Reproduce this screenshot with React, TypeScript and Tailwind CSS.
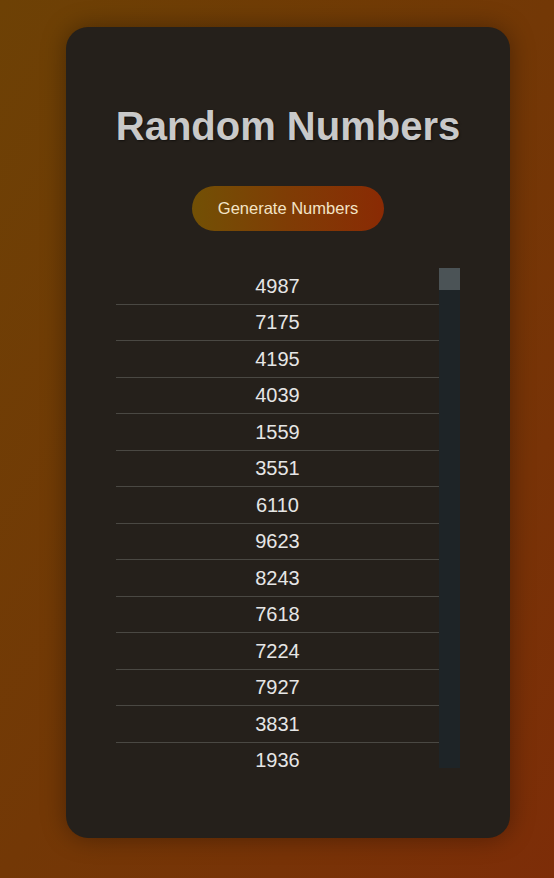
const numbers = [4987, 7175, 4195, 4039, 1559, 3551, 6110, 9623, 8243, 7618, 7224, 7927, 3831, 1936]

const App = () => {
  return (
    <div className="min-h-[878px] w-full bg-gradient-to-br from-[#6d4105] via-[#733806] to-[#7d2d08] pt-[27px] pb-[40px] font-['Liberation_Sans',Arial,sans-serif]">
      <div className="ml-[66px] flex h-[811px] w-[444px] flex-col items-center rounded-[22px] bg-[#25201b] px-[50px] pt-[50px] shadow-[0_0_24px_rgba(0,0,0,0.35)]">
        <h1 className="mt-[26px] whitespace-nowrap text-[40px] font-bold leading-[46px] text-[#c9c9c9] [text-shadow:1px_1px_2px_rgba(0,0,0,0.5)]">
          Random Numbers
        </h1>
        <button className="mt-[37px] h-[45px] w-[192px] rounded-full bg-gradient-to-r from-[#725005] via-[#7f3c05] to-[#8a2a04] text-[16.5px] text-[#f3e4c6]">
          Generate Numbers
        </button>
        <div className="mt-[37px] flex h-[500px] w-[344px]">
          <div className="h-full flex-1 overflow-hidden">
            {numbers.map((n, i) => (
              <div
                key={i}
                className="flex h-[36.5px] items-center justify-center border-b border-[#4a4843] text-[20px] text-[#e6e6e6]"
              >
                {n}
              </div>
            ))}
          </div>
          {/* scrollbar */}
          <div className="h-full w-[21px] bg-[#1e2427]">
            <div className="h-[22px] w-full bg-[#4b5356]" />
          </div>
        </div>
      </div>
    </div>
  )
}

export default App
